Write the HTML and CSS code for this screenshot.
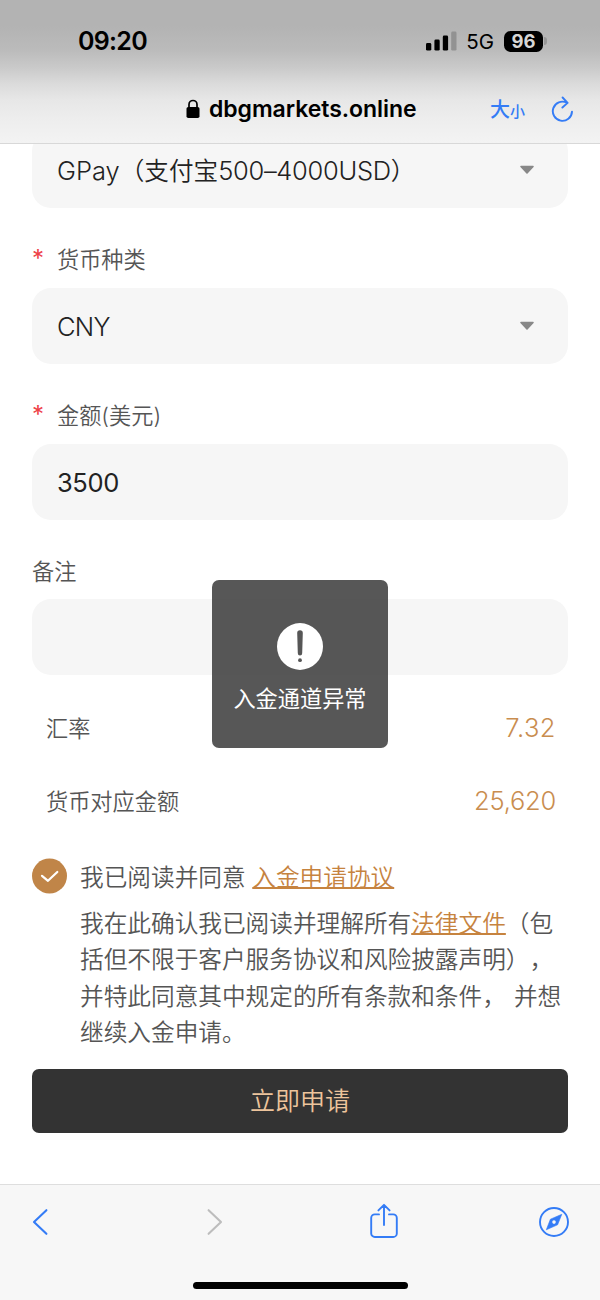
FILE: index.html
```html
<!DOCTYPE html>
<html lang="zh-CN">
<head>
<meta charset="utf-8">
<title>入金申请</title>
<link rel="stylesheet" href="styles.css">
</head>
<body>
<div class="phone">
  <header class="top">
    <div class="status">
      <span class="time">09:20</span>
      <div class="indicators">
        <svg class="signal" width="31" height="20" viewBox="0 0 31 20"><rect x="0" y="12" width="5.3" height="7.6" rx="1.4"/><rect x="8.4" y="8.6" width="5.3" height="11" rx="1.4"/><rect x="16.8" y="4.6" width="5.3" height="15" rx="1.4"/><rect x="25.2" y="0.6" width="5.3" height="19" rx="1.4" fill="#929292"/></svg>
        <span class="network">5G</span>
        <span class="battery">96</span>
        <span class="battery-tip"></span>
      </div>
    </div>
    <div class="address">
      <svg class="lock" width="14" height="20" viewBox="0 0 14 20"><rect x=".5" y="8" width="13" height="11" rx="1.8"/><path d="M3 9V5.5a4 4 0 0 1 8 0V9" fill="none" stroke="#000" stroke-width="1.7"/></svg>
      <span class="domain">dbgmarkets.online</span>
      <span class="text-size"><span class="big">大</span><span class="small">小</span></span>
      <svg class="reload" width="23" height="27" viewBox="0 0 23 27" fill="none" stroke="#347cf6" stroke-width="1.9" stroke-linecap="round" stroke-linejoin="round"><path d="M21 15.6A9.6 9.6 0 1 1 15.8 6.7M11.6 1.5l5 5.4-5.2 4.6"/></svg>
    </div>
  </header>

  <main class="form">
    <div class="field select first"><span class="value method">GPay<span class="cjk">（支付宝</span><span class="range">500–4000USD</span><span class="close">）</span></span><svg class="caret" width="16" height="10" viewBox="0 0 16 10"><path d="M2 1.5h12L8 8z" fill="#888" stroke="#888" stroke-width="1.6" stroke-linejoin="round"/></svg></div>
    <label class="label"><span class="star">*</span>货币种类</label>
    <div class="field select"><span class="value cny">CNY</span><svg class="caret" width="16" height="10" viewBox="0 0 16 10"><path d="M2 1.5h12L8 8z" fill="#888" stroke="#888" stroke-width="1.6" stroke-linejoin="round"/></svg></div>
    <label class="label"><span class="star">*</span>金额(美元)</label>
    <div class="field"><span class="value amount">3500</span></div>
    <label class="label note">备注</label>
    <div class="field"></div>

    <div class="summary">
      <div class="row"><span>汇率</span><span class="number rate">7.32</span></div>
      <div class="row"><span>货币对应金额</span><span class="number">25,620</span></div>
    </div>

    <div class="agree">
      <svg class="check" width="35" height="36" viewBox="0 0 35 36"><circle cx="17.5" cy="18" r="17.5" fill="#c08548"/><path d="M10 17.8l6 5 9.3-8.8" fill="none" stroke="#fff" stroke-width="2.2" stroke-linecap="round" stroke-linejoin="round"/></svg>
      <span>我已阅读并同意 <a>入金申请协议</a></span>
    </div>
    <p class="terms">我在此确认我已阅读并理解所有<a>法律文件</a>（包<br>括但不限于客户服务协议和风险披露声明），<br>并特此同意其中规定的所有条款和条件， 并想<br>继续入金申请。</p>
    <div class="submit">立即申请</div>
  </main>

  <footer class="toolbar">
    <div class="tools">
      <svg width="18" height="28" viewBox="0 0 18 28" fill="none" stroke="#347cf6" stroke-width="2.1" stroke-linecap="round" stroke-linejoin="round"><path d="M14.4 2.2L2 14l12.4 11.8"/></svg>
      <svg class="forward" width="18" height="28" viewBox="0 0 18 28" fill="none" stroke="#bdbdbd" stroke-width="2.1" stroke-linecap="round" stroke-linejoin="round"><path d="M2.6 2.2L15 14 2.6 25.8"/></svg>
      <svg class="share" width="28" height="36" viewBox="0 0 28 36" fill="none" stroke="#347cf6" stroke-width="1.9" stroke-linecap="round" stroke-linejoin="round"><path d="M9 11.4H4.8A3.6 3.6 0 0 0 1.2 15v15.4A3.6 3.6 0 0 0 4.8 34h18.4a3.6 3.6 0 0 0 3.6-3.6V15a3.6 3.6 0 0 0-3.6-3.6H19M14 22V2M8.4 7.4L14 1.8l5.6 5.6"/></svg>
      <svg class="compass" width="30" height="30" viewBox="0 0 30 30"><circle cx="15" cy="15" r="14" fill="none" stroke="#347cf6" stroke-width="1.9"/><path d="M22.8 7.3L18.6 17.8 7.3 22.8l4.1-10.6z" fill="#347cf6" stroke="#347cf6" stroke-width=".6" stroke-linejoin="round"/><circle cx="15" cy="15.1" r="1.8" fill="#f7f7f7"/></svg>
    </div>
    <div class="home"></div>
  </footer>

  <div class="toast">
    <svg width="46" height="47" viewBox="0 0 46 47"><ellipse cx="23" cy="23.5" rx="23" ry="23.4" fill="#fff"/><path d="M20.2 10a2.8 2.8 0 0 1 5.6 0l-.6 20.2a2.2 2.2 0 0 1-4.4 0z" fill="#565656"/><circle cx="23" cy="37.2" r="1.9" fill="#565656"/></svg>
    <span>入金通道异常</span>
  </div>
</div>
</body>
</html>
```
FILE: styles.css
```css
* { box-sizing: border-box; }
body { margin: 0; background: #fff; }
.phone {
  position: relative;
  display: flex;
  flex-direction: column;
  width: 600px;
  height: 1300px;
  overflow: hidden;
  font-family: Inter, "Noto Sans CJK SC", sans-serif;
  color: #555;
  white-space: nowrap;
  text-spacing-trim: space-all;
}
svg { display: block; flex: none; }

.top {
  position: relative;
  z-index: 1;
  flex: none;
  height: 144px;
  border-bottom: 1px solid #d8d8d8;
  background: linear-gradient(#b3b3b3 0, #b3b3b3 26px, #bbb 50px, #cacaca 68px, #dbdbdb 84px, #e7e7e7 100px, #ededed 118px, #f3f3f3 143px);
  color: #000;
}
.status {
  display: flex;
  justify-content: space-between;
  align-items: center;
  height: 82px;
  padding: 0 53px 0 78px;
}
.time { font-size: 25px; font-weight: 600; letter-spacing: -.7px; }
.indicators { display: flex; align-items: center; }
.network { margin-left: 9px; font-size: 20.5px; }
.battery {
  width: 39px;
  height: 21px;
  margin-left: 10px;
  border-radius: 6.5px;
  background: #000;
  color: #d6d6d6;
  font-size: 18.5px;
  font-weight: 700;
  line-height: 21px;
  text-align: center;
}
.battery-tip { width: 3px; height: 8px; margin-left: 1px; border-radius: 0 3px 3px 0; background: #979797; }
.address {
  display: flex;
  align-items: center;
  height: 54px;
  padding-left: 186px;
}
.domain { width: 208px; margin-left: 9px; font-size: 23px; font-weight: 600; letter-spacing: -.05px; }
.text-size { display: flex; align-items: baseline; width: 36px; margin: 4px 0 0 73px; color: #347cf6; font-weight: 500; }
.big { font-size: 20px; line-height: 30px; }
.small { font-size: 15px; line-height: 30px; }
.reload { margin-left: 25px; }

.form { flex: none; height: 1040px; padding: 0 32px; }
.field {
  display: flex;
  align-items: center;
  justify-content: space-between;
  height: 76px;
  padding: 0 33.5px 0 25px;
  border-radius: 19px;
  background: #f6f6f6;
  color: #222;
}
.first { margin-top: -12px; }
.value { font-size: 25.5px; font-weight: 350; }
.cny { letter-spacing: -.7px; }
.method { padding-bottom: 3px; }
.cjk { font-size: 24.6px; }
.range { letter-spacing: -.3px; }
.close { font-size: 24.6px; }
.amount { font-weight: 400; letter-spacing: -.4px; }
.label {
  display: flex;
  align-items: center;
  height: 80px;
  padding-top: 20px;
  font-size: 22.2px;
  font-weight: 350;
}
.note { height: 79px; padding-top: 21px; }
.star { width: 25px; color: #ee4148; font-size: 24px; font-weight: 400; }
.summary { margin-top: 15px; padding: 0 12px 0 14px; }
.row { display: flex; align-items: center; justify-content: space-between; height: 73px; font-size: 22.2px; font-weight: 350; }
.number { padding-top: 2px; color: #c98d4f; font-size: 25.5px; letter-spacing: -.25px; }
.rate { letter-spacing: .5px; }
.agree { display: flex; align-items: center; gap: 13px; height: 36px; margin-top: 22px; font-size: 23.67px; font-weight: 350; }
a { color: #c6833f; text-decoration: underline; text-decoration-thickness: 1.5px; text-underline-offset: 1px; }
.terms { margin: 12px 0 0 48px; font-size: 23.67px; font-weight: 350; line-height: 36.3px; word-spacing: 1.5px; }
.submit {
  height: 64px;
  margin-top: 17.5px;
  border-radius: 7px;
  background: #333;
  color: #edc49c;
  font-size: 25px;
  font-weight: 350;
  line-height: 64px;
  text-align: center;
}

.toolbar { flex: 1; border-top: 1px solid #dedede; background: #f7f7f7; }
.tools { display: flex; align-items: center; height: 74px; padding-left: 32px; }
.forward { margin-left: 155.5px; }
.share { margin: -2px 0 0 146px; }
.compass { margin-left: 141.5px; }
.home { width: 215px; height: 7px; margin: 23px auto 0; border-radius: 4px; background: #000; }

.toast {
  position: absolute;
  left: 212px;
  top: 580px;
  display: flex;
  flex-direction: column;
  align-items: center;
  width: 176px;
  height: 167.5px;
  padding-top: 43px;
  border-radius: 7px;
  background: rgba(50, 50, 50, .82);
  color: #fff;
  font-size: 22.2px;
  line-height: 32px;
}
.toast span { margin-top: 13px; }
```
